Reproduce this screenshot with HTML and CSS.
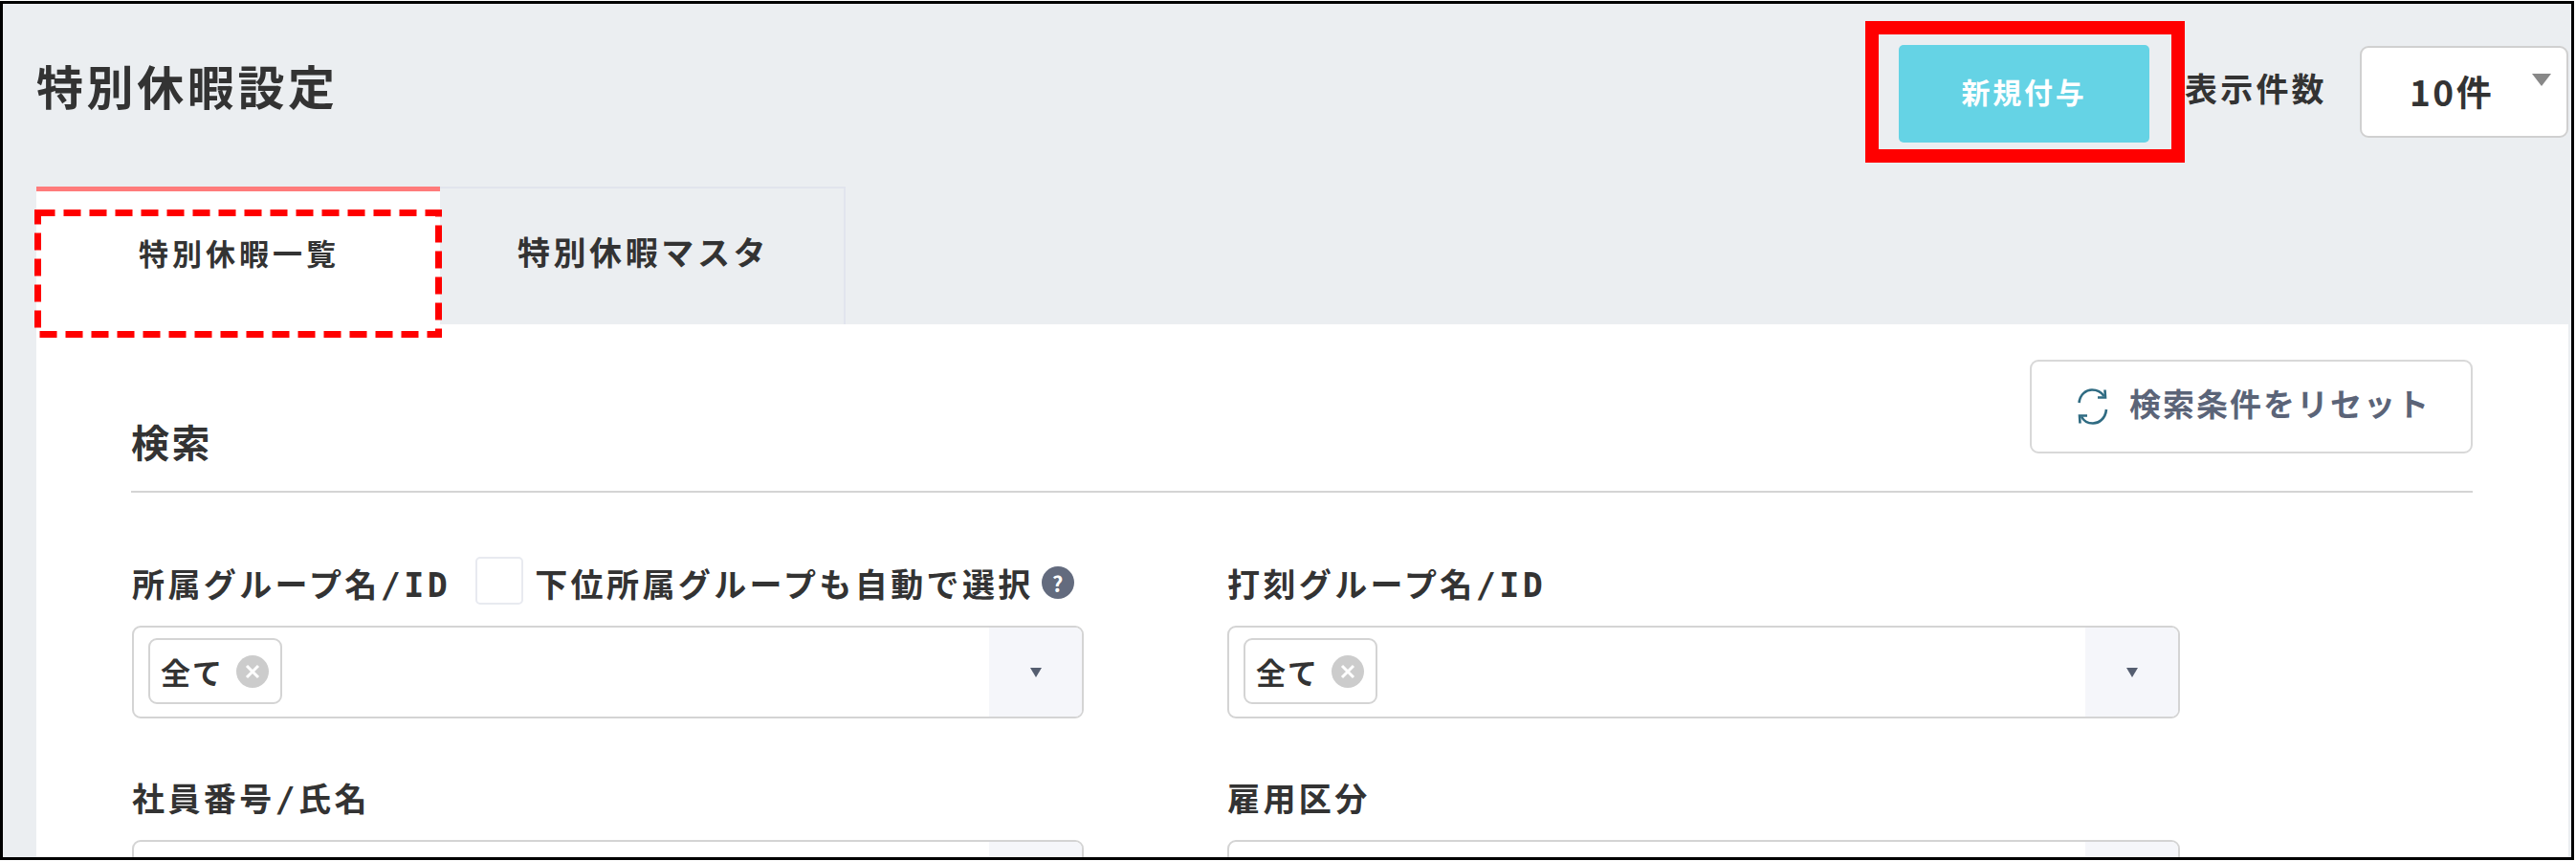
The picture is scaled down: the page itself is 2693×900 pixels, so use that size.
FILE: index.html
```html
<!DOCTYPE html>
<html lang="ja">
<head>
    <meta charset="UTF-8">
    <meta name="viewport" content="width=device-width, initial-scale=1.0">
    <title>特別休暇設定</title>
    <link rel="stylesheet" href="styles.css">
</head>
<body>
<div class="frame">
    <header class="page-head">
        <h1 class="page-title">特別休暇設定</h1>
        <div class="mark-solid">
            <button class="btn-new" type="button">新規付与</button>
        </div>
        <span class="count-label">表示件数</span>
        <div class="count-select">
            <span class="count-value">10件</span>
            <span class="count-caret"></span>
        </div>
    </header>

    <nav class="tabs">
        <div class="tab tab-active">
            <span>特別休暇一覧</span>
            <svg class="mark-dashed" width="426" height="134" viewBox="0 0 426 134">
                <rect x="3.500" y="3.500" width="419" height="127" fill="none" stroke="#ff0000" stroke-width="7" stroke-dasharray="18 9"/>
            </svg>
        </div>
        <div class="tab tab-idle">特別休暇マスタ</div>
    </nav>

    <main class="panel">
        <div class="search-head">
            <h2 class="search-title">検索</h2>
            <button class="btn-reset" type="button">
                <svg class="reset-icon" width="32" height="38" viewBox="0 0 32 38" fill="none" stroke="#2f6b82" stroke-width="2.6">
                    <path d="M1.5 15C2.5 6 9 1.5 15 1.5c5 0 9.500 2 12.500 6.500"/>
                    <path d="M28.500 1.500L29 9.500L21 9.500"/>
                    <path d="M30 22c-1 10-8 14.500-14 14.500c-5 0-9.500-2-12-7"/>
                    <path d="M2.500 36.500L2 28.500L10 28.500"/>
                </svg>
                <span class="reset-text">検索条件をリセット</span>
            </button>
        </div>

        <div class="form-grid">
            <div class="field">
                <div class="field-label">
                    <label>所属グループ名<span class="mono">/ID</span></label>
                    <span class="check-box"></span>
                    <label>下位所属グループも自動で選択</label>
                    <span class="help">?</span>
                </div>
                <div class="multi-select">
                    <div class="chips">
                        <span class="chip">全て
                            <svg class="chip-x" width="34" height="34" viewBox="0 0 34 34"><circle cx="17" cy="17" r="17" fill="#cccccc"/><path d="M11 11L23 23M23 11L11 23" stroke="#ffffff" stroke-width="3"/></svg>
                        </span>
                    </div>
                    <div class="caret-box"><span class="caret"></span></div>
                </div>
            </div>
            <div class="field">
                <div class="field-label">
                    <label>打刻グループ名<span class="mono">/ID</span></label>
                </div>
                <div class="multi-select">
                    <div class="chips">
                        <span class="chip">全て
                            <svg class="chip-x" width="34" height="34" viewBox="0 0 34 34"><circle cx="17" cy="17" r="17" fill="#cccccc"/><path d="M11 11L23 23M23 11L11 23" stroke="#ffffff" stroke-width="3"/></svg>
                        </span>
                    </div>
                    <div class="caret-box"><span class="caret"></span></div>
                </div>
            </div>
            <div class="field">
                <div class="field-label">
                    <label>社員番号<span class="mono">/</span>氏名</label>
                </div>
                <div class="multi-select">
                    <div class="chips"></div>
                    <div class="caret-box"></div>
                </div>
            </div>
            <div class="field">
                <div class="field-label">
                    <label>雇用区分</label>
                </div>
                <div class="multi-select">
                    <div class="chips"></div>
                    <div class="caret-box"></div>
                </div>
            </div>
        </div>
    </main>
</div>
</body>
</html>
```

FILE: styles.css
```css
* { box-sizing: border-box; }
body { margin: 0; background: #ffffff; font-family: "Noto Sans CJK JP", "Noto Sans", sans-serif; color: #333333; }
button { font-family: inherit; cursor: pointer; }

.frame { width: 2691px; height: 898px; margin-top: 1px; border: 3px solid #000000; background: #ebeef1; overflow: hidden; padding: 0 3px 0 35px; }

/* header */
.page-head { display: flex; align-items: flex-start; height: 191px; padding-top: 18px; }
.page-title { margin: 37px auto 0 0; font-size: 49px; line-height: 60px; letter-spacing: 3.600px; font-weight: 700; }
.mark-solid { width: 334px; height: 148px; border: 14px solid #ff0000; padding: 11px 0 0 21px; }
.btn-new { width: 262px; height: 102px; padding: 0 0 6px; border: none; border-radius: 5px; background: #65d3e5; color: #ffffff; font-size: 30px; font-weight: 700; letter-spacing: 2.800px; }
.count-label { width: 183px; margin-top: 48px; font-size: 34px; line-height: 44px; letter-spacing: 3.200px; font-weight: 700; }
.count-select { display: flex; justify-content: space-between; width: 218px; height: 96px; margin-top: 26px; padding: 23px 16px 0 50px; background: #ffffff; border: 2px solid #d0d0d0; border-radius: 9px; }
.count-value { font-size: 37px; line-height: 44px; letter-spacing: 2.500px; font-weight: 700; }
.count-caret { width: 0; height: 0; border-left: 10px solid transparent; border-right: 10px solid transparent; border-top: 13px solid #888888; transform: translateY(4px); }

/* tabs */
.tabs { display: flex; height: 144px; }
.tab { display: flex; justify-content: center; }
.tab-active { position: relative; width: 422px; padding: 42px 0 0 2px; background: #ffffff; border-top: 5px solid #ff7b7b; font-size: 31px; line-height: 44px; letter-spacing: 4px; font-weight: 700; }
.tab-idle { width: 424px; padding: 43px 0 0 3px; border: 2px solid #e1e4ed; border-bottom: none; border-left: none; font-size: 34px; line-height: 46px; letter-spacing: 3.600px; font-weight: 700; }
.mark-dashed { position: absolute; left: -2px; top: 19px; }

/* search panel */
.panel { padding: 37px 100px 0 99px; background: #ffffff; height: 560px; }
.search-head { display: flex; justify-content: space-between; align-items: flex-start; height: 139px; border-bottom: 2px solid #d4d4d4; }
.search-title { margin: 60px 0 0 0; font-size: 40px; line-height: 50px; letter-spacing: 2.500px; font-weight: 700; }
.btn-reset { display: flex; align-items: center; gap: 22px; width: 463px; height: 98px; padding: 0 0 0 48px; background: #ffffff; border: 2px solid #d8d8d8; border-radius: 9px; color: #5b6478; font-size: 33px; letter-spacing: 2px; font-weight: 700; }
.reset-icon { flex: none; }
.reset-text { margin-bottom: 8px; }

.form-grid { display: grid; grid-template-columns: 995px 996px; column-gap: 150px; row-gap: 55px; padding: 67px 0 0 1px; }
.field-label { display: flex; align-items: center; height: 50px; margin-bottom: 22px; font-size: 34px; letter-spacing: 3.400px; font-weight: 700; }
.field-label label { margin-top: 5px; }
.mono { font-family: "DejaVu Sans Mono", monospace; font-size: 35px; }
.check-box { width: 50px; height: 50px; margin: 0 12px 0 26px; background: #ffffff; border: 2px solid #e8eaf0; border-radius: 5px; }
.help { display: flex; align-items: center; justify-content: center; width: 34px; height: 34px; margin: 4px 0 0 8px; background: #636b7e; border-radius: 50%; color: #ffffff; font-size: 22px; font-weight: 700; letter-spacing: 0; }

.multi-select { display: flex; height: 97px; background: #ffffff; border: 2px solid #d4d4d4; border-radius: 9px; overflow: hidden; }
.chips { flex: 1; padding: 11px 0 0 15px; }
.chip { display: inline-flex; align-items: center; gap: 13px; height: 69px; padding: 0 12px 0 11px; border: 2px solid #d4d4d4; border-radius: 9px; font-size: 31px; letter-spacing: 2px; font-weight: 700; }
.caret-box { display: flex; align-items: center; justify-content: center; width: 97px; background: #f5f6fa; }
.caret { width: 0; height: 0; border-left: 6px solid transparent; border-right: 6px solid transparent; border-top: 10px solid #555e70; }
```
